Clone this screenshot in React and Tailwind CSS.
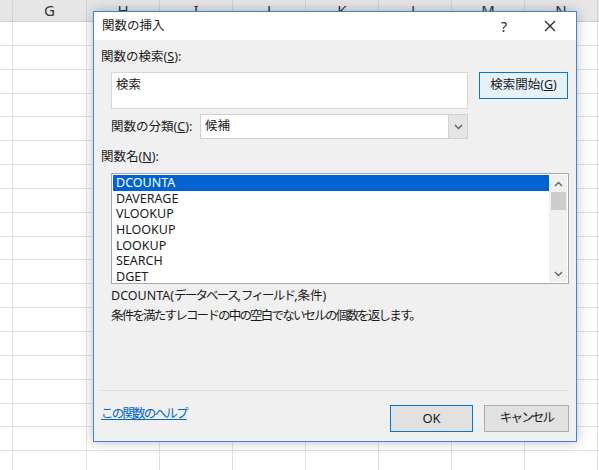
import React from 'react';

const FONT = { fontFamily: '"Noto Sans", "Noto Sans CJK JP", sans-serif' };

const columns = [
    { id: 'F', w: 'w-[13px]', label: '' },
    { id: 'G', w: 'w-[74px]', label: 'G' },
    { id: 'H', w: 'w-[73px]', label: 'H' },
    { id: 'I', w: 'w-[73px]', label: 'I' },
    { id: 'J', w: 'w-[73px]', label: 'J' },
    { id: 'K', w: 'w-[73px]', label: 'K' },
    { id: 'L', w: 'w-[73px]', label: 'L' },
    { id: 'M', w: 'w-[73px]', label: 'M' },
    { id: 'N', w: 'w-[73px]', label: 'N' },
    { id: 'O', w: 'w-[40px]', label: '' }
];

const functions = ['DCOUNTA', 'DAVERAGE', 'VLOOKUP', 'HLOOKUP', 'LOOKUP', 'SEARCH', 'DGET'];

const Chevron = ({ up, className }) => (
    <svg width="9" height="6" viewBox="0 0 9 6" className={className}>
        <path
            d={up ? 'M1 5 L4.5 1.5 L8 5' : 'M1 1 L4.5 4.5 L8 1'}
            fill="none"
            stroke="#606060"
            strokeWidth="1.3"
        />
    </svg>
);

const Sheet = () => (
    <div className="flex flex-col">
        <div className="flex h-[22px] bg-[#e6e6e6] border-b border-[#d0d0d0]">
            {columns.map(col => (
                <div
                    key={col.id}
                    className={`${col.w} shrink-0 border-r border-[#d4d4d4] flex items-center justify-center text-[15px] text-[#333]`}
                >
                    {col.label}
                </div>
            ))}
        </div>
        {Array.from({ length: 19 }).map((_, r) => (
            <div key={r} className="flex h-[23.85px] border-b border-[#e1e1e1]">
                {columns.map(col => (
                    <div key={col.id} className={`${col.w} shrink-0 border-r border-[#e1e1e1]`} />
                ))}
            </div>
        ))}
    </div>
);

const InsertFunctionDialog = () => (
    <div
        className="absolute left-[93px] top-[11px] w-[484px] h-[431px] border border-[#3b84d7] bg-[#f0f0f0] shadow-[0_0_12px_rgba(0,0,0,0.25)] flex flex-col text-[12.5px] text-[#1a1a1a]"
        style={FONT}
    >
        <div className="h-[28px] bg-white flex items-center pl-2 shrink-0">
            <span className="text-[12.5px] text-[#222]">関数の挿入</span>
            <span className="ml-auto text-[14px] text-[#222] w-[14px] text-center mr-[33px]">?</span>
            <svg width="12" height="12" viewBox="0 0 12 12" className="mr-[20px]">
                <path d="M1 1 L11 11 M11 1 L1 11" stroke="#222" strokeWidth="1.2" />
            </svg>
        </div>

        <div className="flex flex-col pl-[7px] pr-[7px]">
            <div className="mt-[9px] h-4 leading-4">
                関数の検索(<span className="underline">S</span>):
            </div>

            <div className="flex mt-[7px] ml-[10px] items-start">
                <div className="w-[357px] h-[37px] bg-white border border-[#d6d6d6] pl-[4px] pt-[4px] leading-4">
                    検索
                </div>
                <button className="ml-[11px] w-[89px] h-[27px] bg-[#e5f1fb] border border-[#0078d7] flex items-center justify-center">
                    検索開始(<span className="underline">G</span>)
                </button>
            </div>

            <div className="flex mt-[5px] ml-[10px] items-center">
                <div className="w-[89px] leading-4">
                    関数の分類(<span className="underline">C</span>):
                </div>
                <div className="w-[268px] h-[25px] bg-white border border-[#d0d0d0] flex items-center">
                    <span className="pl-[4px]">候補</span>
                    <div className="ml-auto w-[19px] h-full bg-[#e5e5e5] border-l border-[#d0d0d0] flex items-center justify-center">
                        <Chevron />
                    </div>
                </div>
            </div>

            <div className="mt-[10px] h-4 leading-4">
                関数名(<span className="underline">N</span>):
            </div>

            <div className="mt-[8px] ml-[10px] w-[458px] h-[111px] bg-white border border-[#a8a8a8] flex p-px">
                <div className="flex-1 flex flex-col">
                    {functions.map((fn, i) => (
                        <div
                            key={fn}
                            className={`h-[15.7px] leading-[15.7px] pl-[3px] ${i === 0 ? 'bg-[#0063d1] text-white' : ''}`}
                        >
                            {fn}
                        </div>
                    ))}
                </div>
                <div className="w-[18px] bg-[#f0f0f0] flex flex-col items-center">
                    <div className="h-[17px] flex items-center justify-center">
                        <Chevron up />
                    </div>
                    <div className="w-[15px] h-[18px] bg-[#cdcdcd]" />
                    <div className="mt-auto h-[17px] flex items-center justify-center">
                        <Chevron />
                    </div>
                </div>
            </div>

            <div className="mt-[4px] ml-[10px] h-4 leading-4">
                DCOUNTA(<span className="tracking-[-1.8px]">データベース</span>,<span className="tracking-[-1.8px]">フィールド</span>,条件)
            </div>
            <div className="mt-[4px] ml-[10px] h-4 leading-4 tracking-[-1.8px]">
                条件を満たすレコードの中の空白でないセルの個数を返します。
            </div>

            <div className="mt-[66px] h-px bg-[#dcdcdc]" />

            <div className="flex mt-[14px] items-center">
                <a className="text-[#0066cc] underline leading-4 -mt-[10px] tracking-[-1.8px]">この関数のヘルプ</a>
                <button className="ml-auto w-[83px] h-[27px] bg-[#e1e1e1] border border-[#0078d7] flex items-center justify-center text-[13px]">
                    OK
                </button>
                <button className="ml-[11px] w-[85px] h-[27px] bg-[#e1e1e1] border border-[#adadad] flex items-center justify-center tracking-[-1.8px]">
                    キャンセル
                </button>
            </div>
        </div>
    </div>
);

const App = () => (
    <div className="relative w-[599px] h-[470px] overflow-hidden bg-white" style={FONT}>
        <Sheet />
        <InsertFunctionDialog />
    </div>
);

export default App;
